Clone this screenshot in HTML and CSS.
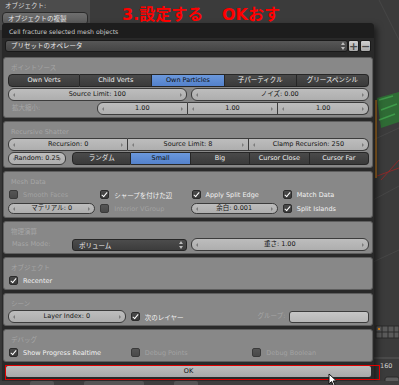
FILE: index.html
```html
<!DOCTYPE html>
<html lang="ja">
<head>
    <meta charset="UTF-8">
    <title>Cell fracture</title>
    <link rel="stylesheet" href="styles.css">
</head>
<body>
    <div class="shelf">
        <div class="shelf-label">オブジェクト:</div>
        <div class="shelf-btn">オブジェクトの複製</div>
    </div>

    <svg class="viewport" width="26" height="385" viewBox="0 0 26 385">
        <path d="M0 140 L26 128 M0 200 L26 186 M0 262 L26 250 M6 0 L26 40" stroke="#474747" stroke-width="1" fill="none"/>
        <path d="M4 98 L26 92 L26 122 L8 128 Z" fill="#2f6b35"/>
        <path d="M6 100 L20 96 M8 110 L24 104 M6 120 L22 114" stroke="#3f9a4a" stroke-width="1.5"/>
        <path d="M3 100 L3 178" stroke="#e08a1e" stroke-width="1.2"/>
        <path d="M4 176 L26 168 M8 180 L26 160" stroke="#8a2a2a" stroke-width="1"/>
        <rect x="3" y="326" width="23" height="12" fill="#5a5a5a" stroke="#2a2a2a"/>
        <path d="M9 326 V338 M15 326 V338 M21 326 V338 M3 332 H26" stroke="#2a2a2a" stroke-width="1"/>
        <rect x="5" y="328" width="2" height="2" fill="#e08a1e"/>
        <path d="M0 358 H26" stroke="#5a5a5a"/>
        <rect x="12" y="377" width="14" height="10" rx="2" fill="#5e5e5e" stroke="#2a2a2a"/>
    </svg>
    <div class="frame-num">160</div>

    <div class="dialog">
        <div class="dialog-title">Cell fracture selected mesh objects</div>
        <div class="preset">
            <div class="preset-menu">プリセットのオペレータ</div>
            <span class="updown"></span>
            <span class="pm">+</span><span class="pm">−</span>
        </div>

        <div class="panels">
            <div class="panel">
                <div class="panel-title">ポイントソース</div>
                <div class="row seg five">
                    <span class="tog">Own Verts</span>
                    <span class="tog">Child Verts</span>
                    <span class="tog on">Own Particles</span>
                    <span class="tog">子パーティクル</span>
                    <span class="tog">グリースペンシル</span>
                </div>
                <div class="row halves">
                    <div class="num">Source Limit: 100</div>
                    <div class="num">ノイズ: 0.00</div>
                </div>
                <div class="row scale">
                    <span class="label">拡大縮小:</span>
                    <div class="joined three">
                        <div class="num">1.00</div>
                        <div class="num">1.00</div>
                        <div class="num">1.00</div>
                    </div>
                </div>
            </div>

            <div class="panel">
                <div class="panel-title">Recursive Shatter</div>
                <div class="row joined three">
                    <div class="num">Recursion: 0</div>
                    <div class="num">Source Limit: 8</div>
                    <div class="num">Clamp Recursion: 250</div>
                </div>
                <div class="row random">
                    <div class="num">Random: 0.25</div>
                    <div class="seg five">
                        <span class="tog">ランダム</span>
                        <span class="tog on">Small</span>
                        <span class="tog">Big</span>
                        <span class="tog">Cursor Close</span>
                        <span class="tog">Cursor Far</span>
                    </div>
                </div>
            </div>

            <div class="panel">
                <div class="panel-title">Mesh Data</div>
                <div class="row quarters">
                    <label class="check off"><i></i>Smooth Faces</label>
                    <label class="check"><i class="ticked"></i>シャープを付けた辺</label>
                    <label class="check"><i class="ticked"></i>Apply Split Edge</label>
                    <label class="check"><i class="ticked"></i>Match Data</label>
                </div>
                <div class="row quarters">
                    <div class="num">マテリアル: 0</div>
                    <label class="check off"><i></i>Interior VGroup</label>
                    <div class="num">余白: 0.001</div>
                    <label class="check"><i class="ticked"></i>Split Islands</label>
                </div>
            </div>

            <div class="panel">
                <div class="panel-title">物理演算</div>
                <div class="row halves">
                    <div class="mass">
                        <span class="label">Mass Mode:</span>
                        <div class="menu">ボリューム<span class="updown"></span></div>
                    </div>
                    <div class="num">重さ: 1.00</div>
                </div>
            </div>

            <div class="panel">
                <div class="panel-title">オブジェクト</div>
                <div class="row">
                    <label class="check"><i class="ticked"></i>Recenter</label>
                </div>
            </div>

            <div class="panel">
                <div class="panel-title">シーン</div>
                <div class="row thirds">
                    <div class="num">Layer Index: 0</div>
                    <label class="check"><i class="ticked"></i>次のレイヤー</label>
                    <div class="group">
                        <span class="label">グループ:</span>
                        <div class="field"></div>
                    </div>
                </div>
            </div>

            <div class="panel">
                <div class="panel-title">デバッグ</div>
                <div class="row thirds">
                    <label class="check"><i class="ticked"></i>Show Progress Realtime</label>
                    <label class="check off"><i></i>Debug Points</label>
                    <label class="check off"><i></i>Debug Boolean</label>
                </div>
            </div>
        </div>

        <div class="ok">OK</div>
    </div>

    <div class="statusbar">
        <span class="sb-btn"></span><span class="sb-btn wide"></span><span class="sb-btn"></span>
    </div>

    <div class="note note-set">3.設定する</div>
    <div class="note note-ok">OKおす</div>
    <div class="ok-frame"></div>

    <svg class="cursor" width="10" height="14" viewBox="0 0 10 14">
        <path d="M1 1 L1 11 L3.5 8.6 L5.4 12.6 L7 11.9 L5.2 8 L8.6 8 Z" fill="#ffffff" stroke="#111111" stroke-width="1" stroke-linejoin="round"/>
    </svg>
</body>
</html>
```

FILE: styles.css
```css
* {
    box-sizing: border-box;
}
html, body {
    margin: 0;
}
body {
    position: relative;
    width: 399px;
    height: 385px;
    overflow: hidden;
    background: #3b3b3b;
    font-family: "DejaVu Sans", "Noto Sans CJK JP", sans-serif;
    font-size: 6.5px;
    color: #111;
}

/* tool shelf peeking out at the top left */
.shelf {
    width: 90px;
    height: 30px;
    padding: 2px 2px 0 2px;
    background: #4c4c4c;
}
.shelf-label {
    color: #dcdcdc;
    padding-left: 3px;
    line-height: 9px;
}
.shelf-btn {
    margin-top: 1px;
    height: 13px;
    line-height: 12px;
    padding-left: 5px;
    border: 1px solid #2a2a2a;
    border-radius: 4px;
    background: linear-gradient(#6e6e6e, #5a5a5a);
    color: #e8e8e8;
}

.viewport {
    position: absolute;
    right: 0;
    top: 0;
}
.frame-num {
    position: absolute;
    left: 380px;
    top: 362px;
    color: #d0d0d0;
}

/* the popup */
.dialog {
    position: absolute;
    left: 2px;
    top: 23px;
    width: 372px;
    height: 358px;
    background: #292929;
    border-radius: 4px 4px 0 0;
    box-shadow: 3px 3px 6px rgba(0, 0, 0, 0.55);
}
.dialog-title {
    height: 15px;
    padding: 3px 7px 0;
    line-height: 12px;
    font-size: 6.2px;
    background: #1d1d1d;
    border-radius: 4px 4px 0 0;
    color: #c8c8c8;
}
.preset {
    display: flex;
    align-items: center;
    height: 12px;
    margin: 2px 3px 0 3px;
}
.preset-menu {
    flex: 1;
    height: 12px;
    line-height: 10px;
    padding-left: 5px;
    border: 1px solid #1a1a1a;
    border-radius: 3px;
    background: linear-gradient(#575757, #444);
    color: #ececec;
}
.updown {
    display: inline-block;
    width: 5px;
    height: 8px;
    margin: 0 1px 0 -7px;
    position: relative;
}
.updown::before, .updown::after {
    content: "";
    position: absolute;
    left: 0;
    border-left: 2px solid transparent;
    border-right: 2px solid transparent;
}
.updown::before {
    top: 0;
    border-bottom: 3px solid #bbb;
}
.updown::after {
    bottom: 0;
    border-top: 3px solid #bbb;
}
.pm {
    width: 11px;
    height: 12px;
    margin-left: 1px;
    line-height: 11px;
    text-align: center;
    font-size: 11px;
    font-weight: bold;
    color: #4a4a4a;
    background: linear-gradient(#d0d0d0, #a8a8a8);
    border: 1px solid #1a1a1a;
    border-radius: 2px;
}

.panels {
    display: flex;
    flex-direction: column;
    gap: 3px;
    padding: 5px 1px 0 1px;
}
.panel {
    padding: 0 3px 2px 4px;
    border: 1px solid #5e5e5e;
    border-radius: 3px;
    background: #888;
}
.panel-title {
    height: 16px;
    padding-top: 5px;
    padding-left: 3px;
    line-height: 10px;
    color: #a6a6a6;
}
.row {
    height: 13px;
    margin-bottom: 1px;
}
.row:last-child {
    margin-bottom: 0;
}
.label {
    color: #a6a6a6;
    padding-left: 4px;
    line-height: 13px;
    white-space: nowrap;
}

/* toggle buttons */
.seg {
    display: grid;
    height: 13px;
}
.five {
    grid-template-columns: repeat(5, 1fr);
}
.tog {
    line-height: 11px;
    text-align: center;
    white-space: nowrap;
    color: #efefef;
    background: linear-gradient(#4a4a4a, #3a3a3a);
    border: 1px solid #262626;
    border-left-width: 0;
}
.tog:first-child {
    border-left-width: 1px;
    border-radius: 4px 0 0 4px;
}
.tog:last-child {
    border-radius: 0 4px 4px 0;
}
.tog.on {
    color: #101010;
    background: linear-gradient(#6b98dc, #5381cb);
}

/* number fields */
.num {
    position: relative;
    height: 13px;
    line-height: 11px;
    text-align: center;
    white-space: nowrap;
    color: #141414;
    background: linear-gradient(#bdbdbd, #aeaeae);
    border: 1px solid #3c3c3c;
    border-radius: 6px;
}
.num::before, .num::after {
    content: "";
    position: absolute;
    top: 4px;
    border-top: 2px solid transparent;
    border-bottom: 2px solid transparent;
}
.num::before {
    left: 4px;
    border-right: 2px solid #7c7c7c;
}
.num::after {
    right: 4px;
    border-left: 2px solid #7c7c7c;
}
.joined {
    display: grid;
}
.joined.three {
    grid-template-columns: repeat(3, 1fr);
}
.joined .num {
    border-radius: 0;
    border-left-width: 0;
}
.joined .num:first-child {
    border-left-width: 1px;
    border-radius: 6px 0 0 6px;
}
.joined .num:last-child {
    border-radius: 0 6px 6px 0;
}

.halves {
    display: grid;
    grid-template-columns: 1fr 1fr;
    gap: 4px;
}
.scale {
    display: grid;
    grid-template-columns: 89px 1fr;
}
.random {
    display: grid;
    grid-template-columns: 58px 1fr;
    gap: 6px;
}
.quarters {
    display: grid;
    grid-template-columns: repeat(4, 1fr);
    gap: 4px;
    align-items: center;
}
.quarters .num {
    height: 11px;
    line-height: 9px;
}
.quarters .num::before, .quarters .num::after {
    top: 3px;
}
.thirds {
    display: grid;
    grid-template-columns: repeat(3, 1fr);
    gap: 4px;
    align-items: center;
}

/* check boxes */
.check {
    display: flex;
    align-items: center;
    gap: 5px;
    height: 13px;
    padding-left: 1px;
    white-space: nowrap;
    color: #f2f2f2;
}
.check.off {
    color: #a2a2a2;
}
.check i {
    position: relative;
    width: 9px;
    height: 9px;
    flex: none;
    border-radius: 2px;
    background: linear-gradient(#4a4a4a, #3a3a3a);
    border: 1px solid #2c2c2c;
}
.check.off i {
    background: linear-gradient(#555, #494949);
    border-color: #3a3a3a;
}
.check i.ticked::after {
    content: "";
    position: absolute;
    left: 2px;
    top: 0;
    width: 2px;
    height: 5px;
    border: solid #fff;
    border-width: 0 1.5px 1.5px 0;
    transform: rotate(40deg);
}

.mass {
    display: grid;
    grid-template-columns: 64px 1fr;
    align-items: center;
}
.menu {
    display: flex;
    justify-content: space-between;
    align-items: center;
    height: 12px;
    padding-left: 6px;
    color: #f0f0f0;
    background: linear-gradient(#4c4c4c, #3c3c3c);
    border: 1px solid #262626;
    border-radius: 3px;
}
.menu .updown {
    margin: 0 2px 0 0;
}
.group {
    display: grid;
    grid-template-columns: 38px 1fr;
    align-items: center;
}
.group .label {
    text-align: right;
    padding-right: 4px;
}
.field {
    height: 12px;
    border: 1px solid #3c3c3c;
    border-radius: 3px;
    background: linear-gradient(#c6c6c6, #b6b6b6);
}

.ok {
    height: 13px;
    margin: 3px 2px 0 3px;
    line-height: 11px;
    text-align: center;
    color: #111;
    background: linear-gradient(#bcbcbc, #a9a9a9);
    border: 1px solid #2a2a2a;
    border-radius: 3px;
}

.statusbar {
    position: absolute;
    left: 0;
    top: 381px;
    width: 399px;
    height: 4px;
    display: flex;
    gap: 30px;
    padding-left: 30px;
    background: #3e3e3e;
}
.sb-btn {
    width: 24px;
    height: 6px;
    border-radius: 2px;
    background: #555;
}
.sb-btn.wide {
    width: 60px;
}

/* annotations drawn over the screenshot */
.note {
    position: absolute;
    top: 5px;
    font-size: 16px;
    font-weight: bold;
    line-height: 19px;
    color: #ff0000;
}
.note-set {
    left: 122px;
}
.note-ok {
    left: 222px;
}
.ok-frame {
    position: absolute;
    left: 5px;
    top: 365px;
    width: 375px;
    height: 15px;
    border: 1px solid #e00000;
}
.cursor {
    position: absolute;
    left: 328px;
    top: 373px;
}
```
